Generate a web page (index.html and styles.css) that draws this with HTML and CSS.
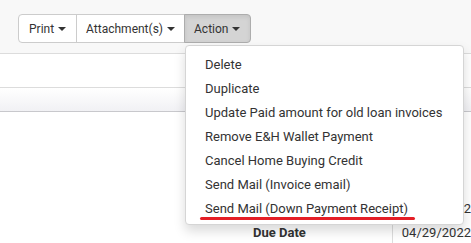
FILE: index.html
```html
<!DOCTYPE html>
<html lang="en">

<head>
    <meta charset="UTF-8">
    <meta name="viewport" content="width=device-width, initial-scale=1.0">
    <title>Invoice</title>
    <link rel="stylesheet" href="styles.css">
</head>

<body>

    <!-- Toolbar -->
    <div class="toolbar">
        <div class="btn-group">
            <button class="btn">Print <span class="caret"></span></button>
            <button class="btn">Attachment(s) <span class="caret"></span></button>
            <div class="dropdown">
                <button class="btn btn-active">Action <span class="caret"></span></button>
                <ul class="dropdown-menu">
                    <li><a href="#">Delete</a></li>
                    <li><a href="#">Duplicate</a></li>
                    <li><a href="#">Update Paid amount for old loan invoices</a></li>
                    <li><a href="#">Remove E&amp;H Wallet Payment</a></li>
                    <li><a href="#">Cancel Home Buying Credit</a></li>
                    <li><a href="#">Send Mail (Invoice email)</a></li>
                    <li><a href="#" class="marked">Send Mail (Down Payment Receipt)</a></li>
                </ul>
            </div>
        </div>
    </div>

    <div class="tabs-row"></div>
    <div class="table-head"></div>

    <!-- Invoice details (upper rows sit under the open menu) -->
    <div class="details">
        <div class="detail-row">
            <div class="detail-label"></div>
            <div class="detail-value">04/29/2022</div>
        </div>
        <div class="detail-row">
            <div class="detail-label">Due Date</div>
            <div class="detail-value">04/29/2022</div>
        </div>
    </div>

</body>
</html>
```

FILE: styles.css
```css
body {
    margin: 0;
    font-family: Roboto, "Liberation Sans", Arial, sans-serif;
    font-size: 13px;
    color: #333;
    background-color: #fff;
    overflow: hidden;
}

/* Toolbar */
.toolbar {
    background-color: #f8f8f8;
    height: 54px;
    border-bottom: 1px solid #dcdcdc;
    padding: 14px 0 0 18px;
    box-sizing: border-box;
}

.btn-group {
    display: flex;
}

.btn {
    font-family: inherit;
    font-size: 12px;
    color: #333;
    background-color: #fff;
    border: 1px solid #ccc;
    height: 29px;
    padding: 0 10px 0 9px;
    margin-left: -1px;
    display: flex;
    align-items: center;
    gap: 4px;
}

.btn-group > .btn:first-child {
    margin-left: 0;
    border-radius: 4px 0 0 4px;
    padding-left: 10px;
}

.btn-active {
    background-color: #d4d4d4;
    border-color: #adadad;
    border-radius: 0 4px 4px 0;
    box-shadow: inset 0 2px 4px rgba(0, 0, 0, 0.08);
}

.caret {
    width: 0;
    height: 0;
    border-top: 4px solid #333;
    border-left: 4px solid transparent;
    border-right: 4px solid transparent;
}

/* Dropdown */
.dropdown {
    position: relative;
    margin-left: -1px;
}

.dropdown-menu {
    position: absolute;
    top: 31px;
    left: 0;
    z-index: 10;
    width: 277px;
    margin: 0;
    padding: 7px 0 3px;
    list-style: none;
    background-color: #fff;
    border: 1px solid #d5d5d5;
    border-radius: 4px;
    box-shadow: 0 6px 12px rgba(0, 0, 0, 0.15);
}

    .dropdown-menu a {
        display: block;
        padding: 3px 19px;
        line-height: 18px;
        color: #333;
        text-decoration: none;
        white-space: nowrap;
    }

    .dropdown-menu .marked {
        position: relative;
    }

        .dropdown-menu .marked::after {
            content: "";
            position: absolute;
            left: 14px;
            top: 20px;
            width: 215px;
            height: 3px;
            border-radius: 2px;
            background-color: #e41e26;
        }

/* Rows under the toolbar */
.tabs-row {
    height: 33px;
    border-bottom: 1px solid #dcdcdc;
}

.table-head {
    height: 23px;
    background: linear-gradient(#fff, #f1f1f4);
    border-bottom: 1px solid #c8c8cc;
}

/* Invoice details */
.details {
    padding-top: 84px;
}

.detail-row {
    display: flex;
    height: 24px;
    align-items: center;
}

.detail-label {
    width: 402px;
    box-sizing: border-box;
    padding-left: 253px;
    font-weight: bold;
    height: 100%;
    display: flex;
    align-items: center;
    border-right: 1px solid #ddd;
}

.detail-value {
    padding-left: 9px;
    white-space: nowrap;
}
```
